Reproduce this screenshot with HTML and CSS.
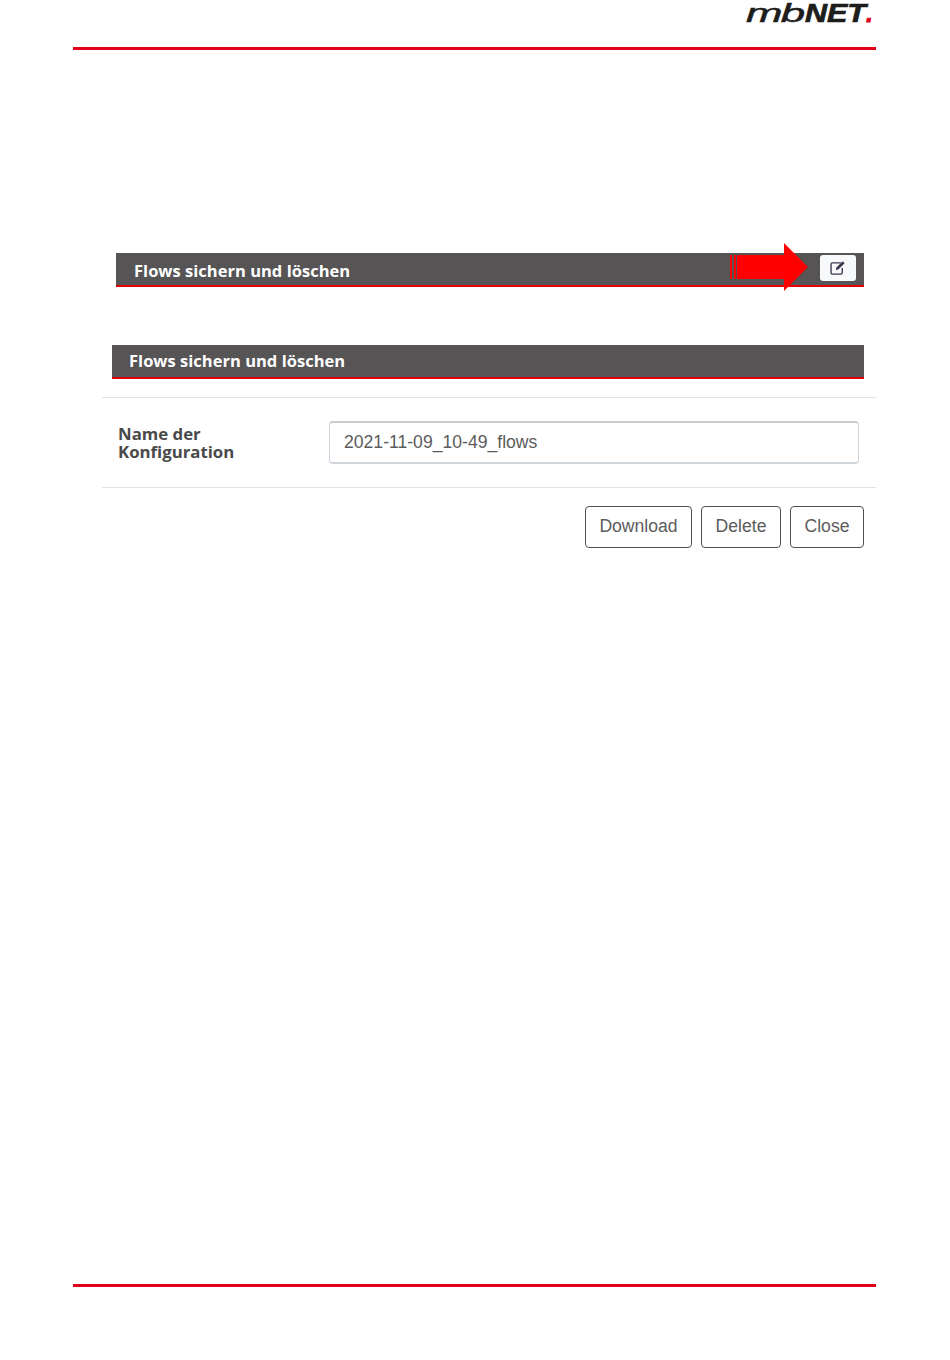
FILE: index.html
```html
<!DOCTYPE html>
<html lang="de">
<head>
<meta charset="utf-8">
<title>mbNET</title>
<link rel="stylesheet" href="styles.css">
</head>
<body>
<div class="page">
  <header class="top">
    <div class="logo"><span class="logo-mb">mb</span><span class="logo-net">NET</span><span class="logo-dot">.</span></div>
  </header>
  <main class="content">
    <section class="bar bar-first">
      <h2 class="bar-title">Flows sichern und löschen</h2>
      <button class="edit-btn" type="button" aria-label="Bearbeiten">
        <svg width="18" height="16" viewBox="0 0 16 14" fill="none">
          <path d="M10.5 2.500H3.200A1.400 1.400 0 0 0 1.800 3.900v7.200a1.400 1.400 0 0 0 1.400 1.400h7.200a1.400 1.400 0 0 0 1.400-1.400V7" stroke="#3a3550" stroke-width="1.200"/>
          <path d="M6 8.800 6.600 6.600 12.200 1l1.700 1.700L8.300 8.300z" fill="#3a3550"/>
        </svg>
      </button>
      <svg class="arrow" width="78" height="48" viewBox="0 0 78 48" aria-hidden="true">
        <path d="M0 12h2v24H0zM4 12h2v24H4zM7 12h47V0l24 24-24 24V36H7z" fill="#ff0000"/>
      </svg>
    </section>
    <section class="bar bar-second">
      <h2 class="bar-title">Flows sichern und löschen</h2>
    </section>
    <div class="form-row">
      <label class="form-label" for="cfg">Name der Konfiguration</label>
      <input class="form-input" id="cfg" type="text" value="2021-11-09_10-49_flows">
    </div>
    <div class="actions">
      <button class="btn btn-download" type="button">Download</button>
      <button class="btn btn-delete" type="button">Delete</button>
      <button class="btn btn-close" type="button">Close</button>
    </div>
  </main>
  <footer class="bottom"></footer>
</div>
</body>
</html>
```
FILE: styles.css
```css
* { box-sizing: border-box; }
html, body { margin: 0; padding: 0; background: #fff; }
body { font-family: "Liberation Sans", Arial, sans-serif; }

.page {
  width: 803px;
  height: 1360px;
  margin-left: 73px;
  display: flex;
  flex-direction: column;
}

.top {
  height: 50px;
  border-bottom: 3px solid #e2001a;
  display: flex;
  justify-content: flex-end;
  padding-right: 3px;
}
.logo {
  display: flex;
  font-family: "Liberation Sans", Arial, sans-serif;
  font-style: italic;
  font-size: 25px;
  line-height: 27px;
  height: 27px;
  color: #1d1d1b;
  white-space: nowrap;
}
.logo-mb,
.logo-net,
.logo-dot {
  display: block;
  transform-origin: left 22px;
}
.logo-mb { width: 59px; font-weight: 400; letter-spacing: -1px; transform: scaleX(1.75); -webkit-text-stroke: 0.5px #1d1d1b; }
.logo-net { width: 61px; font-weight: 700; transform: scaleX(1.22); -webkit-text-stroke: 0.7px #1d1d1b; }
.logo-dot { width: 7px; font-weight: 700; color: #e2001a; -webkit-text-stroke: 0.8px #e2001a; }

.content { flex: 1; display: flex; flex-direction: column; }

.bar {
  height: 34px;
  background: #565455;
  border-bottom: 2px solid #e30000;
  display: flex;
  align-items: center;
  position: relative;
}
.bar-first { margin: 203px 12px 0 43px; padding: 0 8px 0 18px; justify-content: space-between; }
.bar-second { margin: 58px 12px 0 39px; padding-left: 17px; }
.bar-title {
  margin: 0;
  font-family: "Open Sans", sans-serif;
  font-size: 16.5px;
  font-weight: 700;
  line-height: 34px;
  color: #fff;
  letter-spacing: 0.02px;
}
.bar-first .bar-title { padding-top: 3px; }

.edit-btn {
  width: 36px;
  height: 26px;
  padding: 0;
  border: 0;
  border-radius: 3px;
  background: #f8f9fa;
  display: flex;
  align-items: center;
  justify-content: center;
  margin-top: -2px;
}
.arrow { position: absolute; left: 614px; top: -10px; }

.form-row {
  margin: 18px 0 0 29px;
  height: 91px;
  border-top: 1px solid #e3e3e3;
  border-bottom: 1px solid #e3e3e3;
  display: flex;
  align-items: center;
  padding: 0 17px 0 16px;
}
.form-label {
  width: 211px;
  padding-right: 80px;
  font-family: "Open Sans", sans-serif;
  font-size: 16.8px;
  font-weight: 700;
  line-height: 18px;
  color: #4a4a4a;
}
.form-input {
  flex: 1;
  min-width: 0;
  height: 43px;
  padding: 0 14px;
  border: 1px solid #ced4da;
  border-top: 2px solid #c8cdd2;
  border-bottom: 2px solid #d0d5da;
  border-radius: 4px;
  background: #fff;
  font-family: "Liberation Sans", Arial, sans-serif;
  font-size: 17.6px;
  color: #5c5c5c;
  outline: none;
}

.actions {
  margin: 18px 12px 0 0;
  display: flex;
  justify-content: flex-end;
  gap: 9px;
}
.btn {
  height: 42px;
  padding: 0 0 2px;
  border: 1px solid #4f4f4f;
  border-radius: 4px;
  background: #fff;
  font-family: "Liberation Sans", Arial, sans-serif;
  font-size: 17.6px;
  color: #5c5c5c;
}
.btn-download { width: 107px; }
.btn-delete { width: 80px; }
.btn-close { width: 74px; }

.bottom {
  height: 3px;
  margin-bottom: 73px;
  background: #e2001a;
}
```
